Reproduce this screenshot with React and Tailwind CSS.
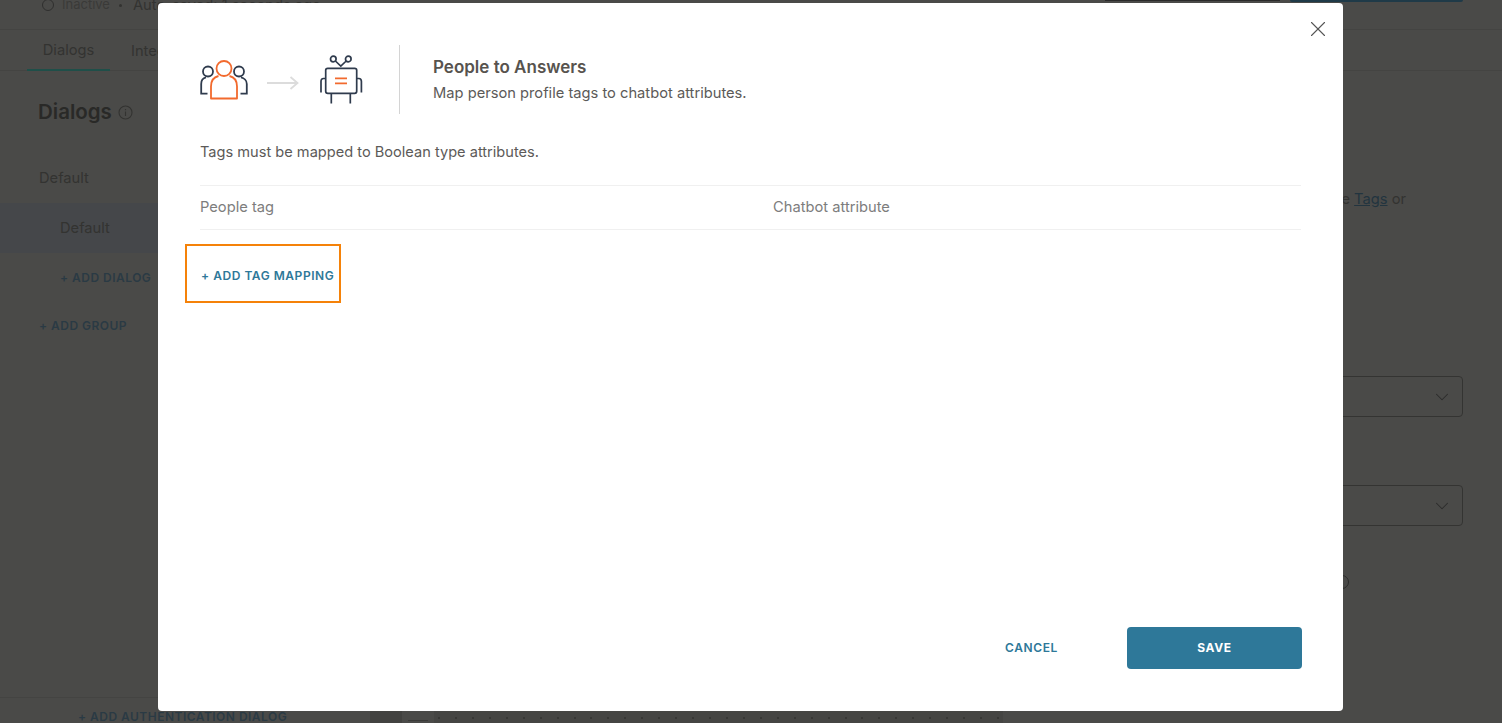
import React from "react";
import { X, ChevronDown } from "lucide-react";

const font = { fontFamily: "Inter, 'Noto Sans', sans-serif" };

function PeopleIcon() {
  return (
    <svg width="48" height="41" viewBox="0 0 48 41" fill="none" strokeWidth="1.8" className="shrink-0">
      <g stroke="#2f3b4d">
        <circle cx="8" cy="12.5" r="5" />
        <circle cx="39" cy="12.5" r="5" />
        <path d="M6 18.4 C3 19 1.2 21.5 1.2 25 V34.6 H7.5" />
        <path d="M41 18.4 C44 19 46.8 21.5 46.8 25 V34.6 H40.5" />
      </g>
      <g stroke="#f26a2e">
        <circle cx="24" cy="9.5" r="7.5" />
        <path d="M18.5 17 C14 18 11 22 11 27.5 V39.5 H37 V27.5 C37 22 34 18 29.5 17" strokeLinejoin="round" />
      </g>
    </svg>
  );
}

function RobotIcon() {
  return (
    <svg width="43" height="50" viewBox="0 0 43 50" fill="none" strokeWidth="1.7" className="shrink-0">
      <g stroke="#2f3b4d">
        <circle cx="13.3" cy="4" r="2.8" />
        <circle cx="28.3" cy="4" r="2.8" />
        <path d="M15.4 6 L20.8 11 L26.2 6" />
        <rect x="5.7" y="13.3" width="31" height="25" rx="2" />
        <path d="M5.7 23.5 H3.5 C1.8 23.5 1 24.5 1 26.5 V37.5" />
        <path d="M36.7 23.5 H38.9 C40.6 23.5 41.4 24.5 41.4 26.5 V37.5" />
        <path d="M11.3 38.3 V48.5" />
        <path d="M30.3 38.3 V48.5" />
      </g>
      <path d="M15 23.3 H27 M15 28.3 H27" stroke="#f26a2e" />
    </svg>
  );
}

const dots = Array.from({ length: 34 });

function Background() {
  return (
    <div className="flex h-[723px] flex-col overflow-hidden bg-[#4a4a48] text-[#333331]">
      <div className="relative flex h-[30px] shrink-0 items-start border-b border-[#444442] pl-[42px]">
        <div className="mt-[-1px] flex h-[12px] items-center gap-[8px] text-[13px]">
          <span className="h-[12px] w-[12px] rounded-full border-[1.5px] border-[#2f2f2e]" />
          <span className="text-[#3a3a38]">Inactive</span>
          <span className="ml-[1px] h-[3px] w-[3px] rounded-full bg-[#333331]" />
          <span className="ml-[3px] text-[14.7px]">Auto-saved: 1 seconds ago</span>
        </div>
        <div className="ml-auto mr-[39px] flex gap-[10px]">
          <div className="h-[1px] w-[175px] bg-[#2a2a2a]" />
          <div className="h-[2px] w-[173px] rounded-b-sm bg-[#1f3a48]" />
        </div>
      </div>
      <div className="flex h-[41px] shrink-0 border-b border-[#444442] pl-[27px] text-[14.7px]">
        <div className="flex h-[41px] w-[83px] items-center justify-center border-b-2 border-[#1f4f49] pt-[2px]">Dialogs</div>
        <div className="ml-[21px] flex items-center pt-[2px]">Integrations</div>
      </div>
      <div className="flex min-h-0 flex-1">
        <div className="flex w-[370px] shrink-0 flex-col">
          <div className="flex items-center gap-[6px] pl-[38px] pt-[27px]">
            <span className="text-[20.5px] font-semibold leading-[28px] text-[#292927]">Dialogs</span>
            <svg width="15" height="15" viewBox="0 0 15 15" fill="none" stroke="#333331" strokeWidth="1.1">
              <circle cx="7.5" cy="7.5" r="6.5" />
              <path d="M7.5 6.5 V11 M7.5 4 V5.3" />
            </svg>
          </div>
          <div className="mt-[27px] flex h-[50px] items-center pl-[39px] text-[14.7px]">Default</div>
          <div className="flex h-[50px] items-center bg-[#45474a] pl-[60px] text-[14.7px]">Default</div>
          <div className="flex h-[50px] items-center pl-[60px] text-[12px] font-semibold tracking-[0.04em] text-[#2a3a44]">+ ADD DIALOG</div>
          <div className="flex h-[46px] items-center pl-[39px] text-[12px] font-semibold tracking-[0.04em] text-[#2a3a44]">+ ADD GROUP</div>
          <div className="mt-auto flex h-[26px] items-end border-t border-[#444442] pl-[78px] text-[12px] font-semibold tracking-[0.04em] text-[#2a3a44]">
            <span className="mb-[-3px]">+ ADD AUTHENTICATION DIALOG</span>
          </div>
        </div>
        <div className="flex min-w-0 flex-1 flex-col items-end pr-[39px]">
          <div className="mt-[118px] flex w-full justify-end pr-[57px] text-[14.7px] leading-[20px]">
            <span>the&nbsp;</span>
            <span className="text-[#22343f] underline">Tags</span>
            <span>&nbsp;or</span>
          </div>
          <div className="mt-[167px] flex h-[41px] w-[500px] items-center justify-end rounded-sm border-[1.5px] border-[#343432] pr-[9px]">
            <ChevronDown size={22} strokeWidth={1.1} color="#2c2c2b" />
          </div>
          <div className="mt-[68px] flex h-[41px] w-[500px] items-center justify-end rounded-sm border-[1.5px] border-[#343432] pr-[9px]">
            <ChevronDown size={22} strokeWidth={1.1} color="#2c2c2b" />
          </div>
          <div className="mr-[114px] mt-[49px] h-[14px] w-[14px] rounded-full border border-[#2c2c2b]" />
          <div className="mt-auto flex h-[16px] w-[633px] items-end self-start bg-[#454543]">
            <div className="h-full w-[32px] bg-[#424240]" />
            <div className="flex h-full w-[32px] items-end justify-center bg-[#4a4a48] pb-[2px]">
              <div className="h-px w-[20px] bg-[#3a3a38]" />
            </div>
            <div className="flex h-full flex-1 items-center justify-between px-[4px] pt-[6px]">
              {dots.map((_, i) => (
                <span key={i} className="h-[2px] w-[2px] rounded-full bg-[#333331]" />
              ))}
            </div>
          </div>
        </div>
      </div>
    </div>
  );
}

function Modal() {
  return (
    <div className="absolute left-[158px] top-[3px] flex h-[708px] w-[1185px] flex-col rounded-sm bg-white pl-[42px] pr-[42px] text-[14.7px] text-[#5c5a58]">
      <button className="absolute right-[12px] top-[13px] text-[#555]">
        <X size={26} strokeWidth={1} />
      </button>
      <div className="mt-[42px] flex h-[69px] items-center">
        <PeopleIcon />
        <svg width="32" height="14" viewBox="0 0 32 14" fill="none" stroke="#dcdcdc" strokeWidth="1.8" className="ml-[19px] mr-[21px] mt-[6px] shrink-0">
          <path d="M0 7 H30.5 M23.5 1 L30.5 7 L23.5 13" />
        </svg>
        <RobotIcon />
        <div className="ml-[36px] h-[69px] w-px shrink-0 bg-[#d4d4d4]" />
        <div className="ml-[33px] flex flex-col">
          <span className="text-[17px] font-semibold leading-[22px] text-[#57534e]">People to Answers</span>
          <span className="mt-[3px] pt-[1px] leading-[22px]">Map person profile tags to chatbot attributes.</span>
        </div>
      </div>
      <p className="mt-[27px] text-[14.6px] leading-[22px]">Tags must be mapped to Boolean type attributes.</p>
      <div className="mt-[22px] flex h-[45px] items-center border-y border-[#f0f0f0] text-[#7d7d7d]">
        <span className="w-[573px]">People tag</span>
        <span>Chatbot attribute</span>
      </div>
      <button className="ml-[-15px] mt-[14px] flex h-[59px] w-[156px] items-center justify-start border-2 border-[#f58209] pl-[14px] pt-[5px] text-[12px] font-semibold tracking-[0.045em] text-[#2e7899]">
        + ADD TAG MAPPING
      </button>
      <div className="mb-[42px] mt-auto flex items-center justify-end">
        <button className="mr-[69px] text-[12px] font-semibold tracking-[0.05em] text-[#2e7899]">CANCEL</button>
        <button className="mr-[-1px] h-[42px] w-[175px] rounded-sm bg-[#2e7899] text-[12px] font-bold tracking-[0.05em] text-white">SAVE</button>
      </div>
    </div>
  );
}

export default function App() {
  return (
    <div className="relative h-[723px] w-full overflow-hidden" style={font}>
      <Background />
      <Modal />
    </div>
  );
}
